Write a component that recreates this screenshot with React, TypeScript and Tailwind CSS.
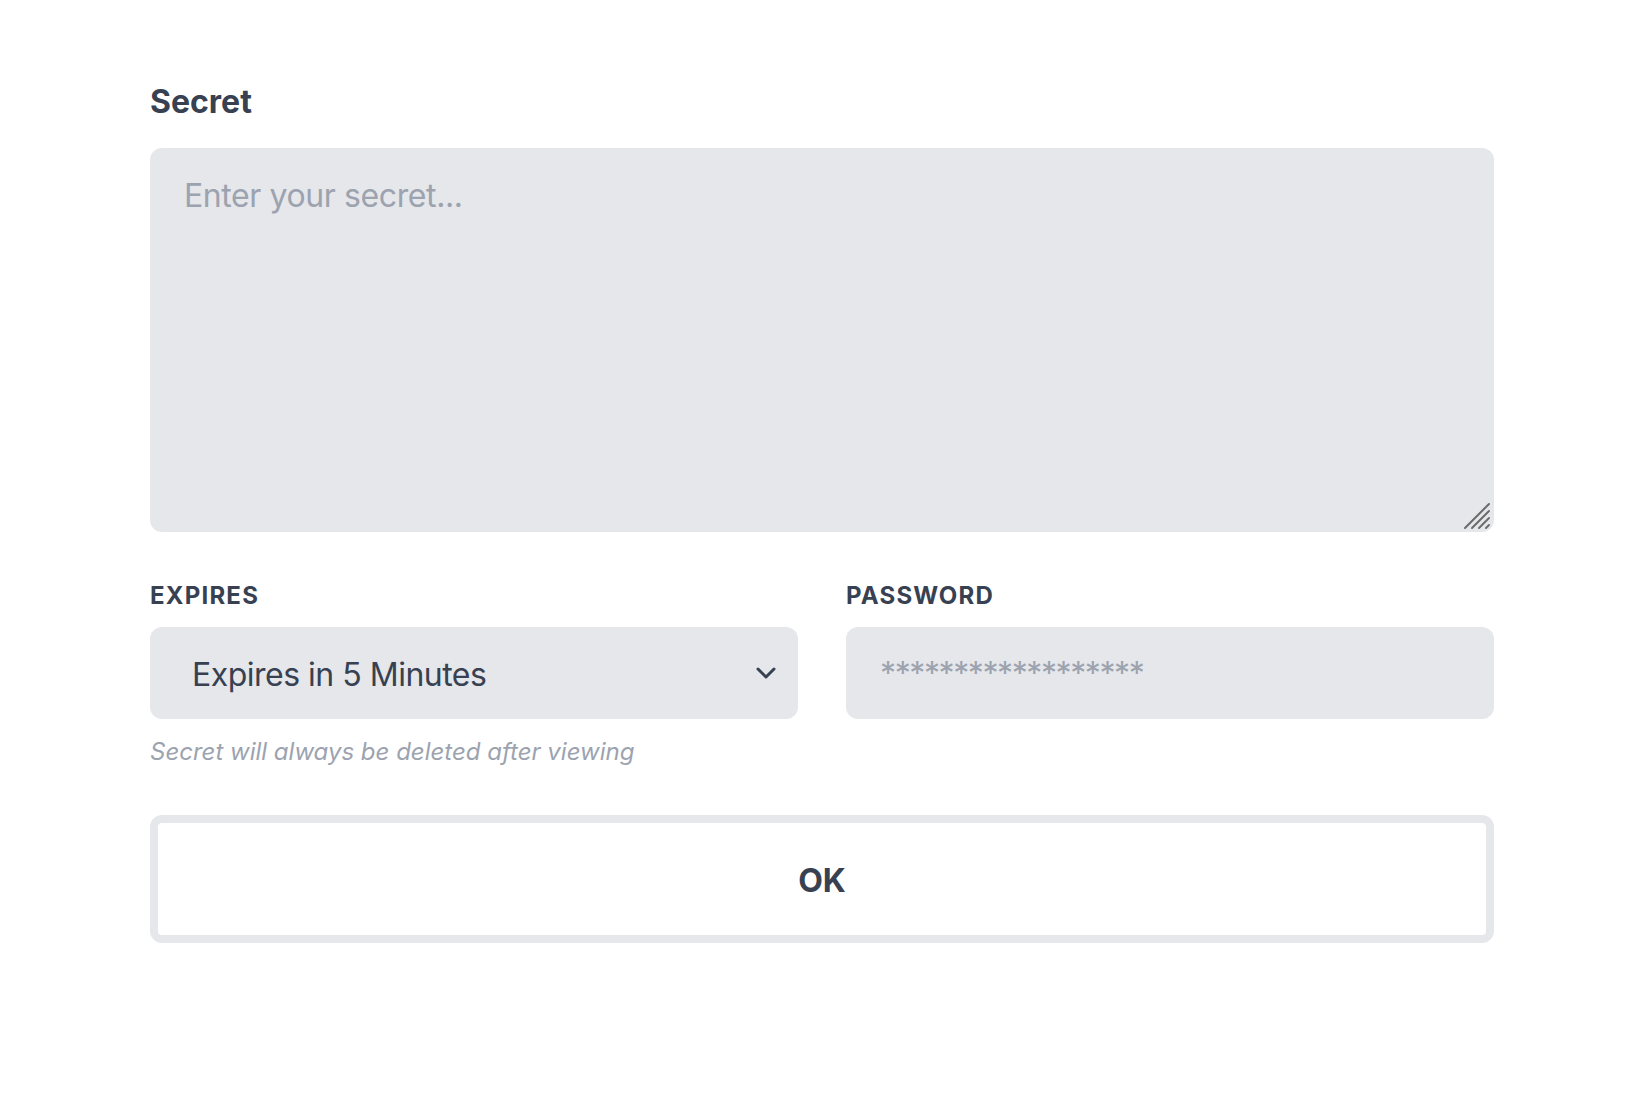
import React, { useState } from "react";

export default function App() {
  const [secret, setSecret] = useState("");
  const [expires, setExpires] = useState("5m");
  const [password, setPassword] = useState("");

  return (
    <div className="min-h-screen bg-white font-['Inter',sans-serif] text-[#374151]">
      <form
        className="ml-[150px] w-[1344px] pt-[78px]"
        onSubmit={(e) => e.preventDefault()}
      >
        <label htmlFor="secret" className="block text-[32px] leading-[48px] font-bold">
          Secret
        </label>
        <div className="relative mt-[22px]">
          <textarea
            id="secret"
            value={secret}
            onChange={(e) => setSecret(e.target.value)}
            placeholder="Enter your secret..."
            className="block h-[384px] w-full resize-none rounded-[12px] bg-[#e5e7eb] px-[34px] py-[24px] text-[32px] leading-[48px] tracking-[-0.4px] text-[#374151] outline-none placeholder:text-[#9ca3af]"
          />
          <ResizeGrip className="pointer-events-none absolute right-0 bottom-0 h-[30px] w-[30px]" />
        </div>

        <div className="mt-[48px] grid grid-cols-2 gap-x-[48px]">
          <div>
            <label htmlFor="expires" className="block text-[24px] leading-[32px] font-bold tracking-wider uppercase">
              Expires
            </label>
            <div className="relative mt-[15px]">
              <select
                id="expires"
                value={expires}
                onChange={(e) => setExpires(e.target.value)}
                className="block h-[92px] w-full appearance-none rounded-[12px] bg-[#e5e7eb] pt-[4px] pl-[42px] pr-[64px] text-[32px] leading-[48px] tracking-[-0.5px] text-[#374151] outline-none"
              >
                <option value="5m">Expires in 5 Minutes</option>
                <option value="1h">Expires in 1 Hour</option>
                <option value="1d">Expires in 1 Day</option>
                <option value="1w">Expires in 1 Week</option>
              </select>
              <ChevronIcon className="pointer-events-none absolute top-[40px] right-[22px] h-[13px] w-[20px] text-[#374151]" />
            </div>
          </div>
          <div>
            <label htmlFor="password" className="block text-[24px] leading-[32px] font-bold tracking-wider uppercase">
              Password
            </label>
            <input
              id="password"
              type="password"
              value={password}
              onChange={(e) => setPassword(e.target.value)}
              placeholder="******************"
              className="mt-[15px] block h-[92px] w-full rounded-[12px] bg-[#e5e7eb] px-[34px] text-[32px] tracking-[-1.4px] text-[#374151] outline-none placeholder:text-[#9ca3af]"
            />
          </div>
        </div>

        <p className="mt-[17px] text-[24px] leading-[32px] text-[#9ca3af] italic">
          Secret will always be deleted after viewing
        </p>

        <button
          type="submit"
          className="mt-[47px] flex h-[128px] w-full items-center justify-center rounded-[12px] border-[8px] border-[#e5e7eb] bg-white pt-[4px] text-[32px] font-bold text-[#374151]"
        >
          OK
        </button>
      </form>
    </div>
  );
}

function ChevronIcon(props: any) {
  return (
    <svg
      {...props}
      viewBox="0 0 20 13"
      fill="none"
      stroke="currentColor"
      strokeWidth="3"
      strokeLinecap="round"
      strokeLinejoin="round"
    >
      <polyline points="2 2 10 10 18 2" />
    </svg>
  );
}

function ResizeGrip(props: any) {
  return (
    <svg {...props} viewBox="0 0 30 30" fill="none" stroke="#6b6b6b" strokeWidth="2" strokeLinecap="round">
      <line x1="1" y1="26" x2="25" y2="2" />
      <line x1="8" y1="26" x2="25" y2="9" />
      <line x1="15" y1="26" x2="25" y2="16" />
      <line x1="22" y1="26" x2="25" y2="23" />
    </svg>
  );
}
